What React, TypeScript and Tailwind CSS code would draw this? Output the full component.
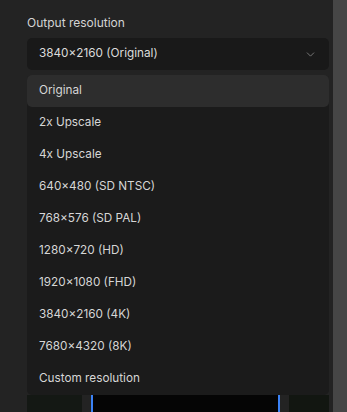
import { ChevronDown } from "lucide-react";

const options = [
  "Original",
  "2x Upscale",
  "4x Upscale",
  "640×480 (SD NTSC)",
  "768×576 (SD PAL)",
  "1280×720 (HD)",
  "1920×1080 (FHD)",
  "3840×2160 (4K)",
  "7680×4320 (8K)",
  "Custom resolution",
];

export default function App() {
  return (
    <div
      className="flex h-[412px] w-[347px] overflow-hidden bg-[#232323]"
      style={{ fontFamily: "Inter, 'Noto Sans', sans-serif" }}
    >
      <div className="flex flex-1 flex-col pl-[27px] pr-[4px] pt-[14px]">
        <div className="shrink-0 text-[12px] leading-[18px] text-[#d4d4d4]">Output resolution</div>

        {/* Select trigger */}
        <div className="mt-[6px] flex h-[32px] shrink-0 items-center justify-between rounded-[5px] bg-[#191919] pl-[12px] pr-[12px]">
          <span className="text-[11.75px] text-[#dcdcdc]">3840×2160 (Original)</span>
          <ChevronDown className="h-[13px] w-[13px] text-[#8a8a8a]" strokeWidth={1.5} />
        </div>

        {/* Open list */}
        <div className="mt-[5px] flex shrink-0 flex-col rounded-[5px] bg-[#1b1b1b]">
          {options.map((o, i) => (
            <div
              key={o}
              className={`flex h-[32px] shrink-0 items-center pl-[12px] text-[11.75px] text-[#d6d6d6] ${
                i === 0 ? "rounded-[5px] bg-[#2d2d2d]" : ""
              }`}
            >
              {o}
            </div>
          ))}
        </div>

        {/* Thumbnails peeking out below */}
        <div className="flex h-[20px] shrink-0 gap-[9px]">
          <div className="w-[55px] bg-[#141814]" />
          <div className="w-[189px] border-x-[2px] border-[#3b82f6] bg-[#050505]" />
          <div className="flex-1 bg-[#121611]" />
        </div>
      </div>
      <div className="w-[14px] bg-[#464646]" />
    </div>
  );
}
